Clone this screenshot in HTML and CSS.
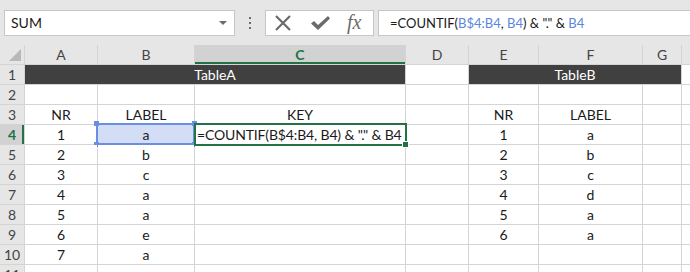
FILE: index.html
```html
<!DOCTYPE html>
<html lang="en">
<head>
    <meta charset="UTF-8">
    <title>COUNTIF key</title>
    <link rel="stylesheet" href="styles.css">
</head>
<body>
    <div class="toolbar">
        <div class="namebox">
            <span>SUM</span>
            <span class="caret"></span>
        </div>
        <div class="grip"><i></i><i></i><i></i></div>
        <div class="fbuttons">
            <svg class="icon" width="18" height="16" viewBox="0 0 18 16">
                <path d="M2 1 L16 15 M16 1 L2 15" stroke="#6b6b6b" stroke-width="2.2" fill="none"/>
            </svg>
            <svg class="icon" width="21" height="16" viewBox="0 0 21 16">
                <path d="M1 8.5 L4 6 L8 10 L18 1 L20 3.5 L8 15 Z" fill="#6b6b6b"/>
            </svg>
            <span class="fx">fx</span>
        </div>
        <div class="formula">=COUNTIF(<span class="ref">B$4:B4</span>, <span class="ref">B4</span>) &amp; "." &amp; <span class="ref">B4</span></div>
    </div>

    <div class="sheet">
        <div class="hd corner"></div>
        <div class="hd">A</div>
        <div class="hd">B</div>
        <div class="hd hd-active">C</div>
        <div class="hd">D</div>
        <div class="hd">E</div>
        <div class="hd">F</div>
        <div class="hd">G</div>
        <div class="hd"></div>

        <div class="rh">1</div>
        <div class="cell title span3">TableA</div>
        <div class="cell"></div>
        <div class="cell title span3">TableB</div>
        <div class="cell"></div>

        <div class="rh">2</div>
        <div class="cell"></div><div class="cell"></div><div class="cell"></div><div class="cell"></div>
        <div class="cell"></div><div class="cell"></div><div class="cell"></div><div class="cell"></div>

        <div class="rh">3</div>
        <div class="cell">NR</div><div class="cell">LABEL</div><div class="cell">KEY</div><div class="cell"></div>
        <div class="cell">NR</div><div class="cell">LABEL</div><div class="cell"></div><div class="cell"></div>

        <div class="rh rh-active">4</div>
        <div class="cell">1</div>
        <div class="cell ref-cell">a<i class="h tl"></i><i class="h tr"></i><i class="h bl"></i><i class="h br"></i></div>
        <div class="cell active">=COUNTIF(B$4:B4, B4) &amp; "." &amp; B4<i class="fill"></i></div>
        <div class="cell"></div>
        <div class="cell">1</div><div class="cell">a</div><div class="cell"></div><div class="cell"></div>

        <div class="rh">5</div>
        <div class="cell">2</div><div class="cell">b</div><div class="cell"></div><div class="cell"></div>
        <div class="cell">2</div><div class="cell">b</div><div class="cell"></div><div class="cell"></div>

        <div class="rh">6</div>
        <div class="cell">3</div><div class="cell">c</div><div class="cell"></div><div class="cell"></div>
        <div class="cell">3</div><div class="cell">c</div><div class="cell"></div><div class="cell"></div>

        <div class="rh">7</div>
        <div class="cell">4</div><div class="cell">a</div><div class="cell"></div><div class="cell"></div>
        <div class="cell">4</div><div class="cell">d</div><div class="cell"></div><div class="cell"></div>

        <div class="rh">8</div>
        <div class="cell">5</div><div class="cell">a</div><div class="cell"></div><div class="cell"></div>
        <div class="cell">5</div><div class="cell">a</div><div class="cell"></div><div class="cell"></div>

        <div class="rh">9</div>
        <div class="cell">6</div><div class="cell">e</div><div class="cell"></div><div class="cell"></div>
        <div class="cell">6</div><div class="cell">a</div><div class="cell"></div><div class="cell"></div>

        <div class="rh">10</div>
        <div class="cell">7</div><div class="cell">a</div><div class="cell"></div><div class="cell"></div>
        <div class="cell"></div><div class="cell"></div><div class="cell"></div><div class="cell"></div>

        <div class="rh">11</div>
        <div class="cell"></div><div class="cell"></div><div class="cell"></div><div class="cell"></div>
        <div class="cell"></div><div class="cell"></div><div class="cell"></div><div class="cell"></div>
    </div>
</body>
</html>
```

FILE: styles.css
```css
body {
    margin: 0;
    width: 690px;
    height: 272px;
    overflow: hidden;
    font-family: Lato, "Liberation Sans", sans-serif;
    font-size: 14px;
    color: #1a1a1a;
    background: #ffffff;
}
.toolbar {
    height: 45px;
    background: #e6e6e6;
    display: flex;
    align-items: center;
    padding-left: 4px;
    box-sizing: border-box;
}
.namebox {
    width: 231px;
    height: 26px;
    box-sizing: border-box;
    background: #ffffff;
    border: 1px solid #c6c6c6;
    display: flex;
    align-items: center;
    justify-content: space-between;
    padding: 0 7px 0 6px;
    font-size: 14px;
}
.caret {
    width: 0;
    height: 0;
    border-left: 4px solid transparent;
    border-right: 4px solid transparent;
    border-top: 4px solid #6b6b6b;
}
.grip {
    width: 30px;
    display: flex;
    flex-direction: column;
    align-items: center;
    gap: 3px;
}
.grip i {
    width: 2px;
    height: 2px;
    background: #6b6b6b;
}
.fbuttons {
    width: 109px;
    height: 26px;
    box-sizing: border-box;
    background: #ffffff;
    border: 1px solid #c6c6c6;
    display: flex;
    align-items: center;
    padding-left: 8px;
}
.icon {
    margin-right: 18px;
}
.fx {
    font-family: "Liberation Serif", serif;
    font-style: italic;
    font-size: 20px;
    color: #6b6b6b;
    margin-left: -2px;
}
.formula {
    flex: 1;
    margin-left: 4px;
    height: 26px;
    box-sizing: border-box;
    background: #ffffff;
    border: 1px solid #c6c6c6;
    border-right: none;
    display: flex;
    align-items: center;
    padding-left: 11px;
    font-size: 13px;
    white-space: pre;
}
.ref {
    color: #5a86dd;
}
.sheet {
    display: grid;
    grid-template-columns: 24px 72px 96px 210px 62px 69px 103px 38px 1fr;
    grid-auto-rows: 19px;
    gap: 1px;
    background: #d4d4d4;
}
.hd {
    background: #e6e6e6;
    color: #444444;
    text-align: center;
    line-height: 19px;
}
.corner {
    position: relative;
}
.corner::after {
    content: "";
    position: absolute;
    right: 3px;
    bottom: 3px;
    border-left: 12px solid transparent;
    border-bottom: 12px solid #b8b8b8;
}
.hd-active {
    background: #d2d2d2;
    color: #217346;
    font-weight: bold;
    box-shadow: inset 0 -2px 0 #217346;
}
.rh {
    background: #e6e6e6;
    color: #444444;
    text-align: center;
    line-height: 19px;
}
.rh-active {
    background: #d2d2d2;
    color: #217346;
    font-weight: bold;
    box-shadow: inset -2px 0 0 #217346;
}
.cell {
    background: #ffffff;
    text-align: center;
    line-height: 19px;
    white-space: nowrap;
    position: relative;
}
.span3 {
    grid-column: span 3;
}
.title {
    background: #404040;
    color: #ffffff;
}
.ref-cell {
    background: #d3ddf6;
}
.ref-cell::before {
    content: "";
    position: absolute;
    left: -2px;
    right: -1px;
    top: -2px;
    bottom: -1px;
    border: 2px solid #6a8fe0;
}
.h {
    position: absolute;
    width: 5px;
    height: 5px;
    background: #6a8fe0;
}
.tl { left: -4px; top: -4px; }
.tr { right: -3px; top: -4px; }
.bl { left: -4px; bottom: -3px; }
.br { right: -3px; bottom: -3px; }
.active {
    text-align: left;
    padding-left: 2px;
    letter-spacing: -0.15px;
    z-index: 1;
}
.active::before {
    content: "";
    position: absolute;
    left: -1px;
    right: -2px;
    top: -2px;
    bottom: -2px;
    border: 2px solid #217346;
}
.fill {
    position: absolute;
    right: -4px;
    bottom: -4px;
    width: 5px;
    height: 5px;
    background: #217346;
    border: 1px solid #ffffff;
}
```
